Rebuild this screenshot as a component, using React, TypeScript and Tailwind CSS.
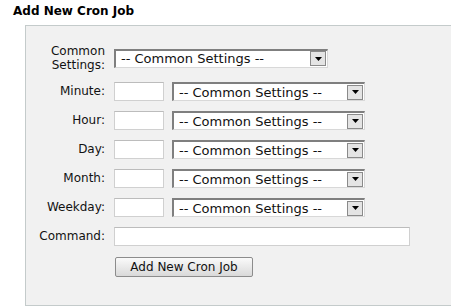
import { Fragment } from 'react';

const FIELDS = ['Minute:', 'Hour:', 'Day:', 'Month:', 'Weekday:'];

function FakeSelect({ width }: { width: string }) {
  return (
    <div
      className={`flex h-[19px] ${width} items-center justify-between border-t-2 border-l-2 border-r border-b border-t-[#7f7f7f] border-l-[#7f7f7f] border-r-[#d8d8d8] border-b-[#d8d8d8] bg-white pl-[5px] pr-[1px]`}
    >
      <span className="whitespace-nowrap text-[13px] leading-none">-- Common Settings --</span>
      <span className="flex h-[15px] w-[16px] items-center justify-center border border-[#8a8a8a] bg-[#e4e4e4]">
        <svg width="7" height="4" viewBox="0 0 7 4">
          <path d="M0 0h7L3.5 4z" fill="#000" />
        </svg>
      </span>
    </div>
  );
}

function TextBox({ width }: { width: string }) {
  return <div className={`h-[19px] ${width} border border-[#d0d0d0] border-t-[#bcbcbc] bg-white`} />;
}

export default function App() {
  return (
    <div className="h-[308px] w-[451px] overflow-hidden bg-white pl-[13px] pt-[4px] text-[12px] text-[#111] [font-family:'DejaVu_Sans',Verdana,sans-serif]">
      <h2 className="text-[12px] leading-[15px] font-bold text-black">Add New Cron Job</h2>
      <div className="mt-[6px] ml-[12px] h-[281px] w-[460px] border border-[#c4cbcb] bg-[#f1f1f1] pt-[18px]">
        <div className="grid grid-cols-[79px_auto] items-center gap-x-[9px] gap-y-[10px]">
          <div className="text-right leading-[14px]">
            Common
            <br />
            Settings:
          </div>
          <FakeSelect width="w-[214px]" />

          {FIELDS.map((f) => (
            <Fragment key={f}>
              <div className="text-right leading-[15px]">{f}</div>
              <div className="flex items-center gap-[8px]">
                <TextBox width="w-[50px]" />
                <FakeSelect width="w-[193px]" />
              </div>
            </Fragment>
          ))}

          <div className="text-right leading-[15px]">Command:</div>
          <div className="h-[19px] w-[296px] border border-[#d0d0d0] border-t-[#bcbcbc] bg-white" />

          <div />
          <div>
            <button className="mt-[1px] ml-[1px] h-[20px] w-[138px] rounded-[2px] border border-[#8c8c8c] bg-gradient-to-b from-[#fafafa] to-[#d9d9d9] text-[12px] leading-none text-[#111]">
              Add New Cron Job
            </button>
          </div>
        </div>
      </div>
    </div>
  );
}
